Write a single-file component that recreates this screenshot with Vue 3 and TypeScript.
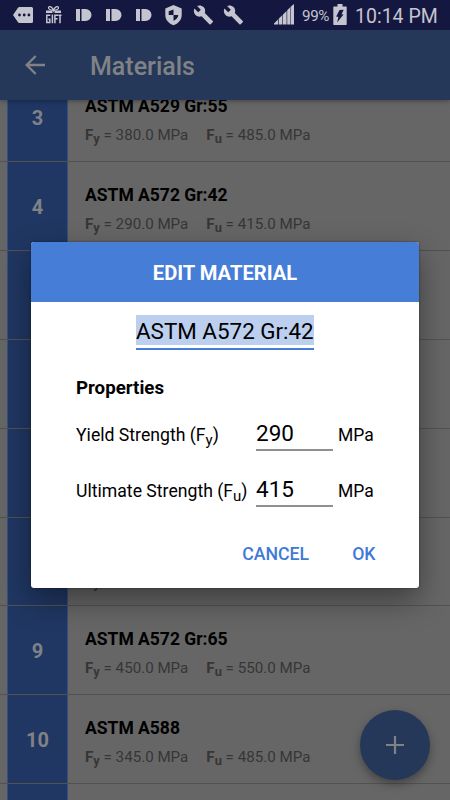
<script setup lang="ts">
import { ref } from 'vue'

interface Material {
  id: number
  name: string
  fy: number
  fu: number
}

const materials: Material[] = [
  { id: 3, name: 'ASTM A529 Gr:55', fy: 380, fu: 485 },
  { id: 4, name: 'ASTM A572 Gr:42', fy: 290, fu: 415 },
  { id: 5, name: 'ASTM A572 Gr:50', fy: 345, fu: 450 },
  { id: 6, name: 'ASTM A572 Gr:55', fy: 380, fu: 485 },
  { id: 7, name: 'ASTM A572 Gr:60', fy: 415, fu: 520 },
  { id: 8, name: 'ASTM A572 Gr:60', fy: 415, fu: 520 },
  { id: 9, name: 'ASTM A572 Gr:65', fy: 450, fu: 550 },
  { id: 10, name: 'ASTM A588', fy: 345, fu: 485 },
]

const name = ref('ASTM A572 Gr:42')
const fy = ref('290')
const fu = ref('415')
</script>

<template>
  <div class="screen">
    <header class="status">
      <svg class="status-icons" width="250" height="30" viewBox="0 0 250 30" fill="#c5c5d0">
        <path d="M13 15l5-7.2q.5-.8 1.500-.8h12q1.500 0 1.500 1.500v13q0 1.500-1.500 1.500h-12q-1 0-1.500-.8z" />
        <g fill="#14173f"><circle cx="19.500" cy="15" r="1.400" /><circle cx="24.200" cy="15" r="1.400" /><circle cx="28.900" cy="15" r="1.400" /></g>
        <path d="M46 10.500h6.500v2.500H46zM54.500 10.500H61V13h-6.500z" />
        <path d="M53.500 10.500C51 10 48 9.500 48.500 7.500s4-.5 5 3c1-3.500 4.500-5 5-3s-2.500 2.500-5 3z" fill="none" stroke="#c5c5d0" stroke-width="1.300" />
        <path d="M50.300 15.200h-3.500v7.300h3v-3.200h-1.400M52.400 14.500v8.700M58 15.200h-3.100v8M55 18.800h2.500M58.300 15.200H61.500M60 15.200v8" fill="none" stroke="#c5c5d0" stroke-width="1.500" />
        <g v-for="x in [76, 106, 136]" :key="x">
          <path :d="`M${x} 9h4v12h-4zM${x + 5.500} 9h4a6 6 0 0 1 0 12h-4z`" />
        </g>
        <path d="M173.500 5l8.200 3.500v6.500c0 5-3.500 8.600-8.200 10.200-4.700-1.600-8.200-5.200-8.200-10.200V8.500z" />
        <path d="M173.500 9.500V15h-4.800v-3.700zM173.500 15h4.800c-.4 2.800-2 4.600-4.800 5.700z" fill="#14173f" />
        <g v-for="x in [193, 223]" :key="x" :transform="`translate(${x} 4.500) scale(.87)`">
          <path d="M22.700 19l-9.100-9.100c.9-2.300.4-5-1.500-6.900-2-2-5-2.400-7.400-1.300L9 6 6 9 1.600 4.700C.4 7.100.9 10.100 2.900 12.100c1.900 1.900 4.600 2.400 6.900 1.500l9.100 9.100c.4.4 1 .4 1.400 0l2.300-2.300c.5-.4.5-1.100.1-1.400z" />
        </g>
      </svg>
      <svg class="signal" width="20" height="21" viewBox="0 0 20 21" fill="#c5c5d0">
        <path d="M0 20.500v-1l4-4v5zM4.700 14.800l3.700-3.700v9.400H4.700zM9 10.500l3.600-3.600v13.600H9zM13.200 6.300l3-3v17.200h-3zM16.700 2.800l3.300-2.800v20.500h-3.300z" />
      </svg>
      <span class="percent">99%</span>
      <svg class="battery" width="14" height="22" viewBox="0 0 14 22">
        <path d="M4.500 0h5v2.500H13q.7 0 .7.7v17q0 .8-.7.8H1q-.7 0-.7-.8v-17q0-.7.700-.7h3.500z" fill="#c5c5d0" />
        <path d="M6.500 6l4.200-.3-2.200 4.500 2 .3-6.400 8 1.300-5.600-2.200-.3z" fill="#14173f" />
      </svg>
      <span class="clock">10:14 PM</span>
    </header>

    <nav class="appbar">
      <svg width="20" height="20" viewBox="0 0 20 20" fill="none" stroke="#808286" stroke-width="2.400">
        <path d="M10.700 1L1.700 10l9 9M1.700 10H20" />
      </svg>
      <h1>Materials</h1>
    </nav>

    <main class="list">
      <article v-for="m in materials" :key="m.id" class="row">
        <div class="num">{{ m.id }}</div>
        <div class="info">
          <h2>{{ m.name }}</h2>
          <p>
            <span class="value"><b>F<sub>y</sub></b> = {{ m.fy.toFixed(1) }} MPa</span>
            <span class="value"><b>F<sub>u</sub></b> = {{ m.fu.toFixed(1) }} MPa</span>
          </p>
        </div>
      </article>
      <div class="row next"><div class="num"></div></div>
    </main>

    <button class="fab" aria-label="Add">
      <svg width="18" height="18" viewBox="0 0 18 18" stroke="#808286" stroke-width="2.200"><path d="M9 0v18M0 9h18" /></svg>
    </button>

    <section class="dialog">
      <h3>EDIT MATERIAL</h3>
      <div class="content">
        <div class="name"><span>{{ name }}</span></div>
        <h4>Properties</h4>
        <label class="field">
          <span class="label">Yield Strength (F<sub>y</sub>)</span>
          <input v-model="fy" />
          <span class="unit">MPa</span>
        </label>
        <label class="field">
          <span class="label">Ultimate Strength (F<sub>u</sub>)</span>
          <input v-model="fu" />
          <span class="unit">MPa</span>
        </label>
      </div>
      <footer>
        <button class="cancel">CANCEL</button>
        <button class="ok">OK</button>
      </footer>
    </section>
  </div>
</template>

<style>
body {
  overflow: hidden;
}
</style>

<style scoped>
.screen {
  position: relative;
  width: 450px;
  height: 800px;
  overflow: hidden;
  background: #666;
  font-family: Roboto, sans-serif;
  display: flex;
  flex-direction: column;
}
h1, h2, h3, h4, p {
  margin: 0;
}
button {
  border: 0;
  padding: 0;
  background: none;
  font-family: inherit;
}
.status {
  position: relative;
  z-index: 2;
  flex: none;
  height: 30px;
  display: flex;
  align-items: center;
  background: #14173f;
  color: #c5c5d0;
}
.signal {
  margin: 0 0 1px 24px;
}
.percent {
  width: 28px;
  margin: 1px 0 0 8px;
  font-size: 15.200px;
  letter-spacing: -0.4px;
}
.battery {
  margin-left: 3px;
}
.clock {
  margin: 2px 0 0 8px;
  font-size: 19.500px;
  white-space: nowrap;
}
.appbar {
  position: relative;
  z-index: 1;
  flex: none;
  height: 70px;
  display: flex;
  align-items: center;
  padding-left: 25px;
  background: #253859;
  box-shadow: 0 1px 5px rgba(0, 0, 0, 0.35);
}
.appbar h1 {
  margin: 3px 0 0 45px;
  font-size: 25px;
  font-weight: 500;
  color: #808286;
}
.list {
  margin-top: -26.600px;
}
.row {
  height: 88.830px;
  box-sizing: border-box;
  display: flex;
  padding-left: 7px;
  border-bottom: 1px solid #525252;
}
.num {
  width: 59px;
  border: 1px solid #335080;
  border-width: 0 1px;
  display: flex;
  align-items: center;
  justify-content: center;
  padding-top: 1px;
  background: #203763;
  color: #808286;
  font-size: 20px;
  font-weight: 700;
}
.info {
  padding: 21px 0 0 17px;
}
.info h2 {
  font-size: 17.500px;
  line-height: 24px;
  font-weight: 700;
  color: #000;
}
.info p {
  display: flex;
  gap: 18px;
  margin-top: 7px;
  font-size: 15.150px;
  line-height: 20px;
  color: #363636;
}
.value {
  white-space: nowrap;
}
sub {
  font-size: 0.85em;
  line-height: 0;
  vertical-align: -0.27em;
}
.fab {
  position: absolute;
  left: 360px;
  top: 710px;
  width: 70px;
  height: 70px;
  border-radius: 50%;
  background: #253859;
  display: flex;
  align-items: center;
  justify-content: center;
  box-shadow: 0 4px 10px rgba(0, 0, 0, 0.35);
}
.dialog {
  position: absolute;
  z-index: 3;
  left: 31px;
  top: 242px;
  width: 388px;
  height: 345.500px;
  border-radius: 3px;
  overflow: hidden;
  background: #fff;
  color: #000;
  box-shadow: 0 0 2px rgba(0, 0, 0, 0.5), 0 12px 30px rgba(0, 0, 0, 0.4);
}
.dialog h3 {
  height: 60px;
  line-height: 63px;
  text-align: center;
  font-size: 20.150px;
  font-weight: 700;
  color: #fff;
  background: #467dd6;
}
.content {
  padding: 13px 45px 0;
}
.name {
  width: 178px;
  height: 32.500px;
  margin: 0 auto;
  border-bottom: 2.500px solid #467dd6;
}
.name span {
  display: block;
  height: 30px;
  line-height: 32px;
  background: #bccfee;
  font-size: 22.400px;
  white-space: nowrap;
}
.dialog h4 {
  margin-top: 26px;
  font-size: 18.700px;
  line-height: 24px;
  font-weight: 700;
}
.field {
  display: grid;
  grid-template-columns: 180px 77px 1fr;
  align-items: baseline;
  height: 34px;
  margin-top: 17px;
  font-size: 17.500px;
}
.field + .field {
  margin-top: 22.500px;
}
.label {
  font-size: 17.650px;
  white-space: nowrap;
}
.field input {
  width: 77px;
  height: 34px;
  box-sizing: border-box;
  padding: 0;
  border: 0;
  border-bottom: 2px solid #8f8f8f;
  outline: none;
  font: 22.500px Roboto, sans-serif;
  color: #000;
}
.unit {
  padding-left: 5px;
}
footer {
  display: flex;
  justify-content: flex-end;
  gap: 43px;
  padding: 34.500px 43.500px 0 0;
}
footer button {
  font-size: 17.700px;
  line-height: 24px;
  font-weight: 500;
  color: #3f7ad6;
}
</style>
